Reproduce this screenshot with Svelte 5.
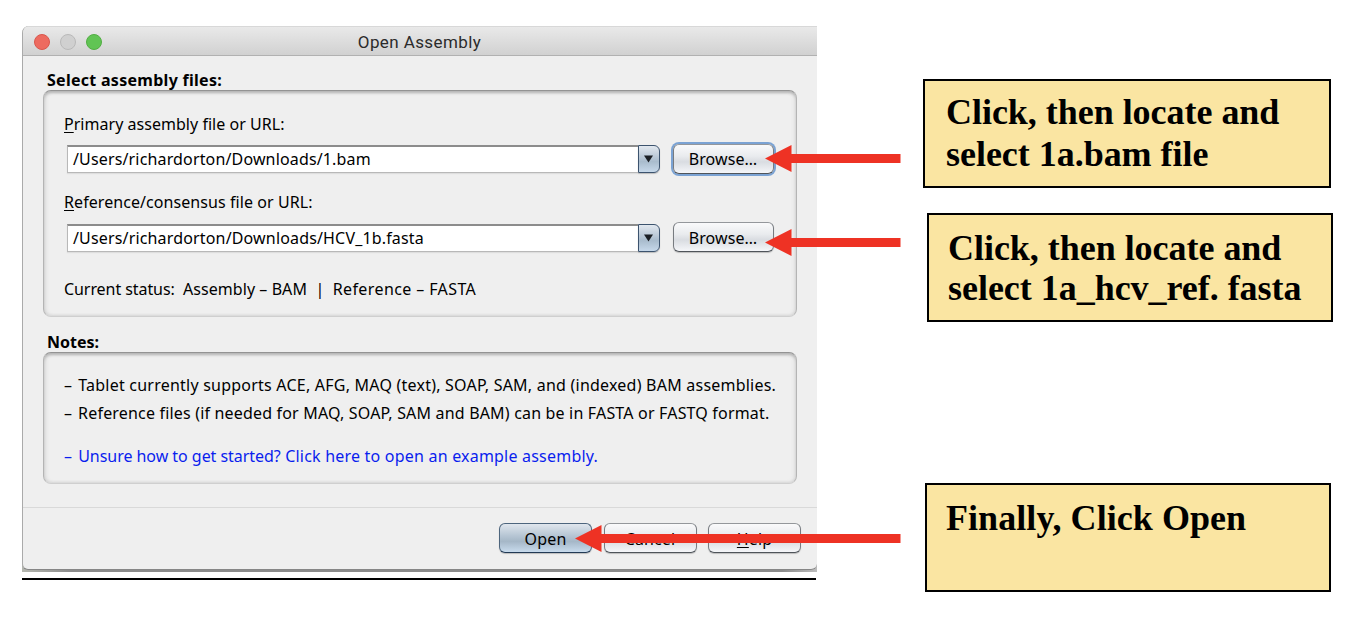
<script>
  const sources = [
    { key: 'P', label: 'rimary assembly file or URL:', value: '/Users/richardorton/Downloads/1.bam', focused: true, ls: 0.03, vls: 0.15 },
    { key: 'R', label: 'eference/consensus file or URL:', value: '/Users/richardorton/Downloads/HCV_1b.fasta', focused: false, ls: 0.07, vls: 0.16 }
  ];
  const callouts = [
    { lines: ['Click, then locate and', 'select 1a.bam file'], cls: 'first' },
    { lines: ['Click, then locate and', 'select 1a_hcv_ref. fasta'], cls: 'second' },
    { lines: ['Finally, Click Open'], cls: 'third' }
  ];
</script>

<main>
  <div class="left">
    <section class="window">
      <div class="frame">
        <header>
          <span class="light red"></span><span class="light gray"></span><span class="light green"></span>
          <span class="title">Open Assembly</span>
        </header>
        <div class="body">
          <h2 class="h-select">Select assembly files:</h2>
          <div class="panel files">
            {#each sources as s}
              <div class="label" style="letter-spacing:{s.ls}px"><u>{s.key}</u>{s.label}</div>
              <div class="row">
                <div class="combo" class:lower={!s.focused}>
                  <div class="field"><span style="letter-spacing:{s.vls}px">{s.value}</span></div>
                  <div class="drop"><svg width="9" height="8" viewBox="0 0 9 8"><path d="M0 .5h9L4.5 7.5z" fill="#1b1f24" /></svg></div>
                </div>
                <div class="btn browse" class:focused={s.focused}><span>Browse…</span></div>
              </div>
            {/each}
            <div class="status"><span class="s1">Current status:&nbsp;</span> <span class="s2">Assembly – BAM&nbsp; |&nbsp;</span> <span class="s3">Reference – FASTA</span></div>
          </div>
          <h2 class="h-notes">Notes:</h2>
          <div class="panel notes">
            <p class="n1"><i>–</i> Tablet currently supports ACE, AFG, MAQ (text), SOAP, SAM, and (indexed) BAM assemblies.</p>
            <p class="n2"><i>–</i> Reference files (if needed for MAQ, SOAP, SAM and BAM) can be in FASTA or FASTQ format.</p>
            <p class="n3"><i>–</i> <span class="ask">Unsure how to get started?</span> <span>Click here to open an example assembly.</span></p>
          </div>
        </div>
        <footer>
          <div class="btn primary"><span>Open</span></div>
          <div class="btn"><span>Cancel</span></div>
          <div class="btn"><span><u>H</u>elp</span></div>
        </footer>
      </div>
    </section>
    <div class="rule"></div>
  </div>
  <aside>
    {#each callouts as c}
      <div class="callout {c.cls}">
        {#each c.lines as line}<div>{line}</div>{/each}
      </div>
    {/each}
  </aside>
  <svg class="arrows" width="1360" height="620" viewBox="0 0 1360 620" fill="#ee3224">
    <path d="M765 158.500L791.500 145v9H900.500v9H791.500v9z" />
    <path d="M765 242.500L791.500 229v9H900.500v9H791.500v9z" />
    <path d="M575 538.500L601.500 525v9H900.500v9H601.500v9z" />
  </svg>
</main>

<style>
  :global(body) { margin: 0; background: #fff; }
  main {
    position: relative; box-sizing: border-box; width: 1360px; height: 620px; overflow: hidden;
    display: flex; padding-left: 22px; background: #fff; color: #000;
    font: 16px/22px "Noto Sans", "Open Sans", sans-serif;
  }
  main * { box-sizing: border-box; }
  .left { width: 795px; padding-top: 26px; }
  .window { height: 546px; background: linear-gradient(90deg, #b5b7b0, #8c8c8c 50px, #8c8c8c 760px, #bdbdbd); border-radius: 7px 0 0 0; }
  .frame {
    height: 544px; background: #efefef; border-left: 1px solid #aaa; border-bottom: 1px solid #868686;
    border-radius: 7px 0 6px 6px; overflow: hidden; display: flex; flex-direction: column;
  }
  header {
    height: 30px; flex: none; display: flex; align-items: center; position: relative; padding-left: 11px; gap: 10px;
    border-top: 1px solid #d8d8d8; border-bottom: 1px solid #b1b1b1; background: linear-gradient(#e9e9e9, #d1d1d1);
  }
  .light { width: 16px; height: 16px; border-radius: 50%; margin-top: 1px; }
  .red { background: #ed6b60; border: 1px solid #d9574d; }
  .gray { background: #d0d0d0; border: 1px solid #b9b9b9; }
  .green { background: #61c454; border: 1px solid #52ae43; }
  .title {
    position: absolute; left: 0; right: 1px; top: 5px; text-align: center; color: #2b2b2b;
    font: 17px/20px Roboto, sans-serif; letter-spacing: .4px;
  }
  .body { height: 451px; flex: none; padding: 13px 20px 0; }
  h2 { margin: 0 0 0 4px; font-size: 16px; line-height: 22px; font-weight: 700; height: 21px; white-space: nowrap; }
  .h-select { letter-spacing: .28px; }
  .h-notes { margin-top: 14px; }
  .panel {
    border: 1px solid #b4b4b4; border-top: 1px solid #939393; border-bottom-color: #cfcfcf; border-radius: 8px;
    box-shadow: inset 0 3px 3px -1px #b4b4b4, inset 2px 0 4px -1px #d0d0d0, inset -2px 0 4px -1px #d8d8d8, inset 0 -1px 2px #e2e2e2;
    padding-left: 20px; white-space: nowrap;
  }
  .files { height: 227px; padding-top: 22px; }
  .notes { height: 132px; padding-top: 21px; }
  .label { height: 22px; }
  .row { display: flex; align-items: center; height: 30px; margin: 9px 0 17px 3px; }
  .combo { display: flex; width: 593px; height: 28px; margin-right: 13px; }
  .lower { margin-top: 2px; }
  .field {
    flex: 1; background: #fff; border: 1px solid #b8b8b8; border-top: 2px solid #8c8c8c; border-right: 0;
    padding: 0 0 0 5px; line-height: 24px; box-shadow: 0 1px 1px #dedede;
  }
  .drop {
    width: 22px; border: 1px solid #3c536e; border-radius: 0 6px 6px 0; display: flex; align-items: center; justify-content: center;
    background: linear-gradient(#e2e8ef 0, #bccad8 40%, #a9bccd 60%, #c6d8ea); box-shadow: 0 1px 1px #bbb;
  }
  .drop svg { margin-right: 1px; }
  .btn {
    width: 93px; height: 30px; border: 1px solid #777b80; border-top-color: #94979b; border-bottom-color: #4f545a; border-radius: 6px;
    background: linear-gradient(#fafafb, #e9ebee 40%, #d9dce1 60%, #f5f6f9); box-shadow: 0 1px 1px #bcbcbc;
    text-align: center; line-height: 30px; letter-spacing: .1px;
  }
  .btn.browse { width: 101px; line-height: 28px; padding-right: 1px; }
  .lower + .btn.browse { line-height: 30px; }
  .focused { box-shadow: 0 0 0 2px #7ba3d4; }
  .primary {
    border-color: #4d657d; border-bottom-color: #223a55; letter-spacing: .2px;
    background: linear-gradient(#e0e6ed, #b8c7d5 40%, #a5b7c7 62%, #c8dbed);
  }
  .status { margin-top: 26px; }
  .s1 { letter-spacing: -.07px; }
  .s2 { letter-spacing: .06px; }
  .s3 { letter-spacing: .4px; }
  i { font-style: normal; margin-right: 1.6px; }
  p { margin: 0; height: 28px; }
  .n1 { letter-spacing: .225px; }
  .n2 { letter-spacing: .18px; }
  .n3 { margin-top: 15px; color: #0a1eee; letter-spacing: .21px; }
  .ask { letter-spacing: -.04px; }
  footer { flex: 1; display: flex; gap: 11.500px; padding: 15px 16px 0 0; justify-content: flex-end; border-top: 1px solid #d9d9d9; }
  u { text-decoration-thickness: 1px; text-underline-offset: 2px; }
  .rule { width: 794px; height: 2px; margin-top: 6px; background: #000; }
  aside { padding: 79px 0 0 106px; font: 700 36px/42px "Liberation Serif", serif; white-space: nowrap; letter-spacing: -.03px; }
  .callout { height: 109px; border: 2px solid #000; background: #fae5a2; padding: 10px 0 0 21px; }
  .first { width: 408px; }
  .second { width: 406px; margin: 25px 0 0 4px; line-height: 40px; padding: 13px 0 0 19px; }
  .third { width: 406px; margin: 161px 0 0 2px; padding: 12px 0 0 19px; letter-spacing: .06px; }
  .arrows { position: absolute; left: 0; top: 0; }
</style>
